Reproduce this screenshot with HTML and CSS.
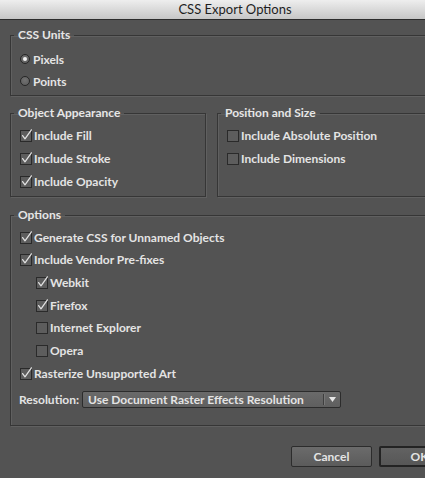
FILE: index.html
```html
<!DOCTYPE html>
<html>
<head>
<meta charset="utf-8">
<title>CSS Export Options</title>
<link rel="stylesheet" href="styles.css">
</head>
<body>
<div class="dialog">
  <div class="titlebar">CSS Export Options</div>
  <div class="content">
    <fieldset class="group units">
      <legend>CSS Units</legend>
      <div class="row"><span class="radio on"></span><span>Pixels</span></div>
      <div class="row"><span class="radio"></span><span>Points</span></div>
    </fieldset>

    <div class="pair">
      <fieldset class="group appearance">
        <legend>Object Appearance</legend>
        <div class="row"><svg class="cb" width="13" height="13" viewBox="0 0 13 13"><rect x="0.5" y="1.5" width="11" height="11"/><path d="M2.6 6.6 L5 9.8 L11.4 0.8"/></svg><span>Include Fill</span></div>
        <div class="row"><svg class="cb" width="13" height="13" viewBox="0 0 13 13"><rect x="0.5" y="1.5" width="11" height="11"/><path d="M2.6 6.6 L5 9.8 L11.4 0.8"/></svg><span>Include Stroke</span></div>
        <div class="row"><svg class="cb" width="13" height="13" viewBox="0 0 13 13"><rect x="0.5" y="1.5" width="11" height="11"/><path d="M2.6 6.6 L5 9.8 L11.4 0.8"/></svg><span>Include Opacity</span></div>
      </fieldset>
      <fieldset class="group position">
        <legend>Position and Size</legend>
        <div class="row"><svg class="cb" width="13" height="13" viewBox="0 0 13 13"><rect x="0.5" y="1.5" width="11" height="11"/></svg><span>Include Absolute Position</span></div>
        <div class="row"><svg class="cb" width="13" height="13" viewBox="0 0 13 13"><rect x="0.5" y="1.5" width="11" height="11"/></svg><span>Include Dimensions</span></div>
      </fieldset>
    </div>

    <fieldset class="group options">
      <legend>Options</legend>
      <div class="orow"><svg class="cb" width="13" height="13" viewBox="0 0 13 13"><rect x="0.5" y="1.5" width="11" height="11"/><path d="M2.6 6.6 L5 9.8 L11.4 0.8"/></svg><span>Generate CSS for Unnamed Objects</span></div>
      <div class="orow"><svg class="cb" width="13" height="13" viewBox="0 0 13 13"><rect x="0.5" y="1.5" width="11" height="11"/><path d="M2.6 6.6 L5 9.8 L11.4 0.8"/></svg><span>Include Vendor Pre-fixes</span></div>
      <div class="orow sub"><svg class="cb" width="13" height="13" viewBox="0 0 13 13"><rect x="0.5" y="1.5" width="11" height="11"/><path d="M2.6 6.6 L5 9.8 L11.4 0.8"/></svg><span>Webkit</span></div>
      <div class="orow sub"><svg class="cb" width="13" height="13" viewBox="0 0 13 13"><rect x="0.5" y="1.5" width="11" height="11"/><path d="M2.6 6.6 L5 9.8 L11.4 0.8"/></svg><span>Firefox</span></div>
      <div class="orow sub"><svg class="cb" width="13" height="13" viewBox="0 0 13 13"><rect x="0.5" y="1.5" width="11" height="11"/></svg><span>Internet Explorer</span></div>
      <div class="orow sub"><svg class="cb" width="13" height="13" viewBox="0 0 13 13"><rect x="0.5" y="1.5" width="11" height="11"/></svg><span>Opera</span></div>
      <div class="orow"><svg class="cb" width="13" height="13" viewBox="0 0 13 13"><rect x="0.5" y="1.5" width="11" height="11"/><path d="M2.6 6.6 L5 9.8 L11.4 0.8"/></svg><span>Rasterize Unsupported Art</span></div>
      <div class="res-row">
        <span class="res-label">Resolution:</span>
        <div class="select">
          <span class="select-text">Use Document Raster Effects Resolution</span>
          <span class="select-btn"><svg width="7" height="5" viewBox="0 0 7 5"><path d="M0 0 H7 L3.5 5 Z"/></svg></span>
        </div>
      </div>
    </fieldset>

    <div class="buttons">
      <button class="btn">Cancel</button>
      <button class="btn default">OK</button>
    </div>
  </div>
</div>
</body>
</html>
```

FILE: styles.css
```css
html, body {
  margin: 0;
  padding: 0;
  background: #535353;
  overflow: hidden;
}

body {
  font-family: Lato, "Liberation Sans", sans-serif;
  font-size: 12px;
  font-weight: 700;
  color: #e4e4e4;
  width: 425px;
  height: 478px;
}

.dialog {
  width: 470px;
  height: 478px;
  background: #535353;
}

.titlebar {
  height: 19px;
  line-height: 19px;
  border-bottom: 1px solid #2c2c2c;
  background: linear-gradient(#eeeeee, #d6d6d6 60%, #c6c6c6);
  color: #1e1e1e;
  font-size: 13px;
  font-weight: 400;
  text-align: center;
}

.content {
  padding: 8px 10px 0 10px;
}

.group {
  margin: 0;
  min-width: 0;
  border: 1px solid #363636;
  box-shadow: 1px 1px 0 #606060, inset 1px 1px 0 #606060;
  padding: 0 8px 3px 9px;
}

.group legend {
  padding: 0 4px;
  margin-left: -6px;
  line-height: 14px;
  height: 14px;
  color: #e6e6e6;
}

.units {
  padding-top: 6px;
}

.row {
  display: flex;
  align-items: center;
  height: 22px;
}

.pair {
  margin-top: 10px;
  display: grid;
  grid-template-columns: 196px 1fr;
  column-gap: 11px;
}

.pair .group {
  padding-top: 4px;
}

.pair .row {
  height: 23px;
}

.radio {
  width: 10px;
  height: 10px;
  border-radius: 50%;
  border: 1px solid #262626;
  background: radial-gradient(circle at 50% 40%, #727272, #5a5a5a);
  margin-right: 3px;
  box-sizing: border-box;
  display: flex;
  align-items: center;
  justify-content: center;
  flex: none;
}

.radio.on::after {
  content: "";
  width: 4px;
  height: 4px;
  border-radius: 50%;
  background: #f2f2f2;
}

.cb {
  flex: none;
  margin-right: 1px;
  overflow: visible;
}

.cb rect {
  fill: #5d5d5d;
  stroke: #2a2a2a;
  stroke-width: 1;
}

.cb path {
  fill: none;
  stroke: #e2e2e2;
  stroke-width: 1.25;
  stroke-linejoin: round;
  stroke-linecap: round;
}

.options {
  margin-top: 11px;
  padding-top: 4px;
  padding-bottom: 17px;
}

.orow {
  display: flex;
  align-items: center;
  height: 22.66px;
}

.orow.sub {
  padding-left: 16px;
}

.res-row {
  margin-top: 6px;
  display: flex;
  align-items: center;
  height: 17px;
}

.res-label {
  width: 63px;
  margin-left: -1px;
  flex: none;
}

.select {
  width: 259px;
  height: 17px;
  box-sizing: border-box;
  border: 1px solid #2c2c2c;
  border-radius: 2px;
  background: linear-gradient(#6a6a6a, #5f5f5f);
  display: flex;
  align-items: center;
}

.select-text {
  flex: 1;
  padding-left: 5px;
  white-space: nowrap;
}

.select-btn {
  width: 16px;
  height: 11px;
  border-left: 1px solid #3e3e3e;
  box-shadow: inset 1px 0 0 #777777;
  display: flex;
  align-items: center;
  justify-content: center;
}

.select-btn svg path {
  fill: #e6e6e6;
}

.buttons {
  margin-top: 20px;
  display: flex;
  justify-content: flex-end;
  gap: 7px;
}

.btn {
  width: 81px;
  height: 21px;
  box-sizing: border-box;
  border: 1px solid #2c2c2c;
  border-radius: 2px;
  background: linear-gradient(#6b6b6b, #5b5b5b);
  color: #e4e4e4;
  font-family: Lato, "Liberation Sans", sans-serif;
  font-size: 12px;
  font-weight: 700;
  padding: 0;
}

.btn.default {
  border: 2px solid #232323;
  background: linear-gradient(#626262, #575757);
}
```
